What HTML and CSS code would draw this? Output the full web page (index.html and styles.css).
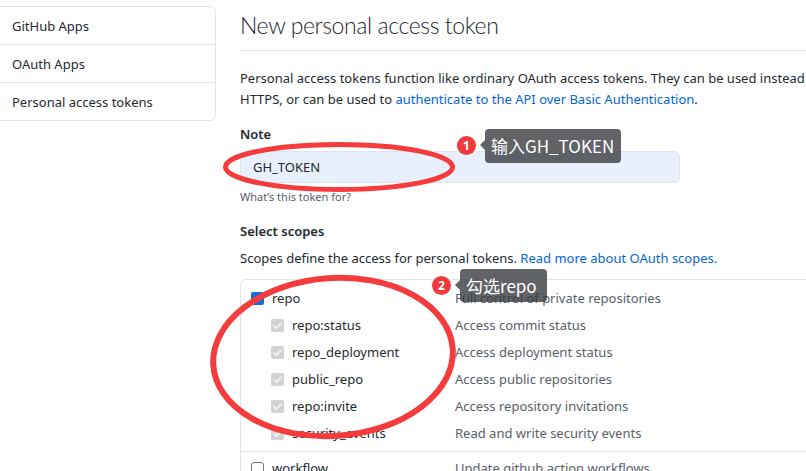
FILE: index.html
```html
<!DOCTYPE html>
<html lang="en">
<head>
<meta charset="utf-8">
<title>New personal access token</title>
<link rel="stylesheet" href="styles.css">
</head>
<body>
<div class="page">
  <nav class="sidebar">
    <a class="nav-item">GitHub Apps</a>
    <a class="nav-item">OAuth Apps</a>
    <a class="nav-item">Personal access tokens</a>
  </nav>
  <main class="main">
    <div class="subhead"><h2 class="subhead-title">New personal access token</h2></div>
    <p class="intro">Personal access tokens function like ordinary OAuth access tokens. They can be used instead of a password for Git over<br>HTTPS, or can be used to <a class="link">authenticate to the API over Basic Authentication</a>.</p>

    <div class="field-label">Note</div>
    <input class="note-input" type="text" value="GH_TOKEN">
    <div class="note-hint">What’s this token for?</div>

    <div class="field-label scopes-label">Select scopes</div>
    <p class="scopes-intro">Scopes define the access for personal tokens. <a class="link">Read more about OAuth scopes.</a></p>

    <div class="scopes">
      <div class="scope-group first">
        <div class="scope-row">
          <div class="scope-name"><span class="cb cb-checked"><svg viewBox="0 0 13 13"><polyline points="3,6.8 5.5,9.2 10,4.2"/></svg></span>repo</div>
          <div class="scope-desc">Full control of private repositories</div>
        </div>
        <div class="scope-row sub">
          <div class="scope-name"><span class="cb cb-disabled"><svg viewBox="0 0 13 13"><polyline points="3,6.8 5.5,9.2 10,4.2"/></svg></span>repo:status</div>
          <div class="scope-desc">Access commit status</div>
        </div>
        <div class="scope-row sub">
          <div class="scope-name"><span class="cb cb-disabled"><svg viewBox="0 0 13 13"><polyline points="3,6.8 5.5,9.2 10,4.2"/></svg></span>repo_deployment</div>
          <div class="scope-desc">Access deployment status</div>
        </div>
        <div class="scope-row sub">
          <div class="scope-name"><span class="cb cb-disabled"><svg viewBox="0 0 13 13"><polyline points="3,6.8 5.5,9.2 10,4.2"/></svg></span>public_repo</div>
          <div class="scope-desc">Access public repositories</div>
        </div>
        <div class="scope-row sub">
          <div class="scope-name"><span class="cb cb-disabled"><svg viewBox="0 0 13 13"><polyline points="3,6.8 5.5,9.2 10,4.2"/></svg></span>repo:invite</div>
          <div class="scope-desc">Access repository invitations</div>
        </div>
        <div class="scope-row sub">
          <div class="scope-name"><span class="cb cb-disabled"><svg viewBox="0 0 13 13"><polyline points="3,6.8 5.5,9.2 10,4.2"/></svg></span>security_events</div>
          <div class="scope-desc">Read and write security events</div>
        </div>
      </div>
      <div class="scope-group">
        <div class="scope-row">
          <div class="scope-name"><span class="cb cb-empty"></span>workflow</div>
          <div class="scope-desc">Update github action workflows</div>
        </div>
      </div>
    </div>
  </main>
</div>

<svg class="marks" width="806" height="471" viewBox="0 0 806 471">
  <ellipse cx="339" cy="167" rx="113.5" ry="22.5" class="mark"/>
  <ellipse cx="333" cy="357" rx="120" ry="79" class="mark mark-thick" transform="rotate(-4 333 357)"/>
</svg>

<div class="badge badge-1">1</div>
<div class="tip tip-1">输入GH_TOKEN</div>
<div class="badge badge-2">2</div>
<div class="tip tip-2">勾选repo</div>
</body>
</html>
```

FILE: styles.css
```css
html, body {
  margin: 0;
  padding: 0;
}

body {
  position: relative;
  width: 806px;
  height: 471px;
  overflow: hidden;
  background: #ffffff;
  color: #24292e;
  font-family: "Noto Sans", "Open Sans", sans-serif;
  font-size: 13px;
  line-height: 21px;
}

.page {
  display: flex;
  align-items: flex-start;
}

/* Sidebar */
.sidebar {
  box-sizing: border-box;
  width: 226px;
  margin-left: -10px;
  margin-top: 6px;
  flex-shrink: 0;
  display: flex;
  flex-direction: column;
  border: 1px solid #e1e4e8;
  border-radius: 6px;
}

.nav-item {
  display: block;
  padding: 9px 0 7px 21px;
  line-height: 21px;
  color: #24292e;
  border-top: 1px solid #e1e4e8;
}

.nav-item:first-child {
  border-top: 0;
}

/* Main column */
.main {
  margin-left: 24px;
  width: 720px;
  flex-shrink: 0;
}

.subhead {
  margin-top: 7px;
  padding-bottom: 7px;
  border-bottom: 1px solid #e1e4e8;
}

.subhead-title {
  margin: 0;
  font-family: "Lato", "Noto Sans", sans-serif;
  font-size: 23px;
  letter-spacing: -0.4px;
  line-height: 36px;
  font-weight: 300;
  color: #24292e;
}

.intro {
  margin: 17px 0 0;
  white-space: nowrap;
}

.link {
  color: #0366d6;
  text-decoration: none;
}

.field-label {
  margin-top: 14px;
  font-weight: 600;
}

.note-input {
  display: block;
  box-sizing: border-box;
  margin-top: 6px;
  width: 440px;
  height: 32px;
  padding: 0 12px;
  border: 1px solid #dfe3ea;
  border-radius: 6px;
  background: #e8f0fe;
  color: #24292e;
  font-family: "Noto Sans", "Open Sans", sans-serif;
  font-size: 13px;
  outline: none;
}

.note-hint {
  margin-top: 5px;
  font-size: 11px;
  line-height: 18px;
  color: #586069;
}

.scopes-label {
  margin-top: 15px;
}

.scopes-intro {
  margin: 6px 0 0;
}

/* Scopes table */
.scopes {
  margin-top: 10px;
  width: 720px;
  border: 1px solid #e1e4e8;
  border-radius: 6px;
}

.scope-group {
  padding: 3px 0 0;
  border-top: 1px solid #e1e4e8;
}

.scope-group.first {
  border-top: 0;
  padding: 5px 0 4px;
}

.scope-row {
  display: flex;
  align-items: center;
  height: 27px;
}

.scope-name {
  box-sizing: border-box;
  width: 214px;
  padding-left: 10px;
  display: flex;
  align-items: center;
}

.scope-row.sub .scope-name {
  padding-left: 30px;
}

.scope-desc {
  color: #586069;
}

.cb {
  box-sizing: border-box;
  width: 13px;
  height: 13px;
  margin-right: 8px;
  border-radius: 2px;
  flex-shrink: 0;
  display: flex;
}

.cb svg {
  width: 13px;
  height: 13px;
}

.cb polyline {
  fill: none;
  stroke: #ffffff;
  stroke-width: 1.8;
  stroke-linecap: round;
  stroke-linejoin: round;
}

.cb-checked {
  background: #0f6fde;
}

.cb-disabled {
  background: #d3d3d3;
}

.cb-disabled polyline {
  stroke: #f2f2f2;
}

.cb-empty {
  border: 1px solid #767676;
  background: #ffffff;
  border-radius: 3px;
}

/* Annotation overlay */
.marks {
  position: absolute;
  left: 0;
  top: 0;
  pointer-events: none;
}

.mark {
  fill: none;
  stroke: #f53b3b;
  stroke-width: 5;
}

.mark-thick {
  stroke-width: 6;
}

.badge {
  position: absolute;
  width: 19px;
  height: 19px;
  border-radius: 50%;
  background: #f0393b;
  color: #ffffff;
  font-family: "Noto Sans", sans-serif;
  font-size: 12px;
  font-weight: 700;
  line-height: 19px;
  text-align: center;
}

.badge-1 {
  left: 457px;
  top: 136px;
}

.badge-2 {
  left: 432px;
  top: 276px;
}

.tip {
  position: absolute;
  box-sizing: border-box;
  height: 34px;
  padding-left: 6px;
  border-radius: 4px;
  background: rgba(58, 60, 64, 0.8);
  color: #ffffff;
  font-family: "Noto Sans CJK SC", "Noto Sans", sans-serif;
  font-size: 17px;
  line-height: 34px;
  white-space: nowrap;
}

.tip::before {
  content: "";
  position: absolute;
  left: -5px;
  top: 11px;
  border-top: 5px solid transparent;
  border-bottom: 5px solid transparent;
  border-right: 5px solid rgba(58, 60, 64, 0.8);
}

.tip-1 {
  left: 485px;
  top: 129px;
  width: 136px;
}

.tip-2 {
  left: 460px;
  top: 269px;
  width: 87px;
  height: 33px;
  line-height: 33px;
}
```
